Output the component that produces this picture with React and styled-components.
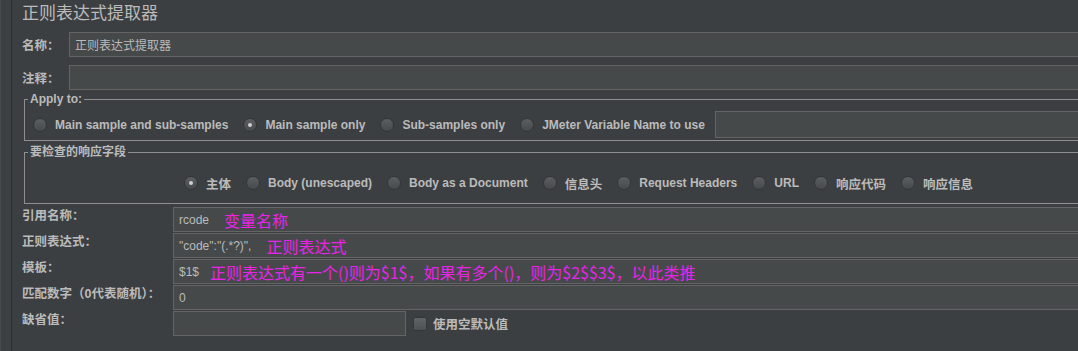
import React from "react";
import styled, { createGlobalStyle } from "styled-components";

const SANS = '"Liberation Sans", "Noto Sans CJK SC", sans-serif';
const CJK = '"Noto Sans CJK SC", "Liberation Sans", sans-serif';

const GlobalStyle = createGlobalStyle`
  html, body {
    margin: 0;
    padding: 0;
    background: #3c3f41;
    overflow: hidden;
  }
  body {
    font-family: ${SANS};
    color: #bbbbbb;
  }
`;

const Page = styled.div`
  display: flex;
  width: 1078px;
  height: 351px;
  overflow: hidden;
  background: #3c3f41;
`;

const SideStrip = styled.div`
  width: 10px;
  flex-shrink: 0;
  background: #3d4043;
  border-left: 1px solid #484b4d;
  border-right: 1px solid #2b2d2f;
`;

const Main = styled.div`
  flex: 1;
  margin-right: -10px;
  padding-left: 10px;
  display: flex;
  flex-direction: column;
`;

const Title = styled.div`
  height: 30px;
  padding-top: 2px;
  line-height: 20px;
  font-family: ${CJK};
  font-size: 17px;
  color: #bbbbbb;
`;

const TopRow = styled.div`
  display: flex;
  align-items: center;
  height: 25px;
  margin-top: ${(p) => p.$mt || 0}px;
`;

const RowLabel = styled.span`
  width: 47px;
  flex-shrink: 0;
  font-size: 12.5px;
  font-weight: bold;
  color: #bbbbbb;
`;

const Field = styled.div`
  box-sizing: border-box;
  flex: ${(p) => (p.$width ? "none" : 1)};
  width: ${(p) => (p.$width ? `${p.$width}px` : "auto")};
  height: ${(p) => p.$height || 25}px;
  display: flex;
  align-items: center;
  padding: 0 5px;
  background: #45494a;
  border: 1px solid #646464;
  font-family: ${SANS};
  font-size: 12px;
  color: #bbbbbb;
  white-space: nowrap;
  overflow: hidden;
`;

const CjkValue = styled.span`
  font-family: ${CJK};
  font-size: 12px;
`;

const Note = styled.span`
  margin-left: ${(p) => p.$gap}px;
  font-family: ${CJK};
  font-size: 16px;
  line-height: 1;
  color: #ea22ea;
`;

const Group = styled.fieldset`
  margin: ${(p) => p.$mt}px 0 0 2px;
  padding: ${(p) => p.$pad};
  border: 1px solid #8e8e8e;
  min-width: 0;
`;

const Legend = styled.legend`
  padding: 0 2px;
  font-size: 12px;
  font-weight: bold;
  line-height: 14px;
  color: #bbbbbb;
`;

const RadioRow = styled.div`
  display: flex;
  align-items: center;
  height: ${(p) => p.$height}px;
  padding-left: ${(p) => p.$indent}px;
`;

const RadioItem = styled.label`
  display: inline-flex;
  align-items: center;
  gap: 8px;
  margin-right: 15px;
  white-space: nowrap;

  &:last-of-type {
    margin-right: 0;
  }
`;

const RadioDot = styled.span`
  position: relative;
  box-sizing: border-box;
  width: 14px;
  height: 14px;
  border-radius: 50%;
  flex-shrink: 0;
  background: linear-gradient(#5c5f61, #474a4c);
  border: 1px solid #333537;

  &::after {
    content: "";
    display: ${(p) => (p.$checked ? "block" : "none")};
    position: absolute;
    left: 4px;
    top: 4px;
    width: 4px;
    height: 4px;
    border-radius: 50%;
    background: #cfcfcf;
  }
`;

const RadioText = styled.span`
  font-size: ${(p) => (p.$cjk ? 12.5 : 12)}px;
  font-weight: bold;
  color: #bbbbbb;
`;

const VarField = styled(Field)`
  margin-left: 10px;
`;

const FormGrid = styled.div`
  display: grid;
  grid-template-columns: 151px 1fr;
  grid-auto-rows: 25px;
  row-gap: 1px;
  margin-top: 3px;
`;

const FormLabel = styled.span`
  padding-top: 2px;
  line-height: 14px;
  font-size: 12.5px;
  font-weight: bold;
  color: #bbbbbb;
  white-space: nowrap;
`;

const InlineRow = styled.div`
  display: flex;
  align-items: center;
  gap: 6px;
`;

const CheckBox = styled.span`
  box-sizing: border-box;
  width: 14px;
  height: 14px;
  border-radius: 2px;
  background: linear-gradient(#606365, #4e5153);
  border: 1px solid #333537;
  margin-left: 1px;
`;

const CheckText = styled.span`
  font-size: 12.5px;
  font-weight: bold;
  color: #bbbbbb;
`;

const Radio = ({ label, checked, cjk }) => (
  <RadioItem>
    <RadioDot $checked={checked} />
    <RadioText $cjk={cjk}>{label}</RadioText>
  </RadioItem>
);

const applyOptions = [
  { label: "Main sample and sub-samples" },
  { label: "Main sample only", checked: true },
  { label: "Sub-samples only" },
  { label: "JMeter Variable Name to use" },
];

const fieldOptions = [
  { label: "主体", checked: true, cjk: true },
  { label: "Body (unescaped)" },
  { label: "Body as a Document" },
  { label: "信息头", cjk: true },
  { label: "Request Headers" },
  { label: "URL" },
  { label: "响应代码", cjk: true },
  { label: "响应信息", cjk: true },
];

export default function App() {
  return (
    <>
      <GlobalStyle />
      <Page>
        <SideStrip />
        <Main>
          <Title>正则表达式提取器</Title>
          <TopRow>
            <RowLabel>名称：</RowLabel>
            <Field>
              <CjkValue>正则表达式提取器</CjkValue>
            </Field>
          </TopRow>
          <TopRow $mt={8}>
            <RowLabel>注释：</RowLabel>
            <Field />
          </TopRow>

          <Group $mt={2} $pad="5px 0 2px 3px">
            <Legend>Apply to:</Legend>
            <RadioRow $height={27} $indent={5}>
              {applyOptions.map((o) => (
                <Radio key={o.label} {...o} />
              ))}
              <VarField $height={27} />
            </RadioRow>
          </Group>

          <Group $mt={4} $pad="12px 0 8px 3px">
            <Legend>要检查的响应字段</Legend>
            <RadioRow $height={24} $indent={156}>
              {fieldOptions.map((o) => (
                <Radio key={o.label} {...o} />
              ))}
            </RadioRow>
          </Group>

          <FormGrid>
            <FormLabel>引用名称：</FormLabel>
            <Field>
              rcode<Note $gap={15}>变量名称</Note>
            </Field>

            <FormLabel>正则表达式：</FormLabel>
            <Field>
              "code":"(.*?)",<Note $gap={15}>正则表达式</Note>
            </Field>

            <FormLabel>模板：</FormLabel>
            <Field>
              $1$
              <Note $gap={11}>
                正则表达式有一个()则为$1$，如果有多个()，则为$2$$3$，以此类推
              </Note>
            </Field>

            <FormLabel>匹配数字（0代表随机）：</FormLabel>
            <Field>0</Field>

            <FormLabel>缺省值：</FormLabel>
            <InlineRow>
              <Field $width={233} />
              <CheckBox />
              <CheckText>使用空默认值</CheckText>
            </InlineRow>
          </FormGrid>
        </Main>
      </Page>
    </>
  );
}
